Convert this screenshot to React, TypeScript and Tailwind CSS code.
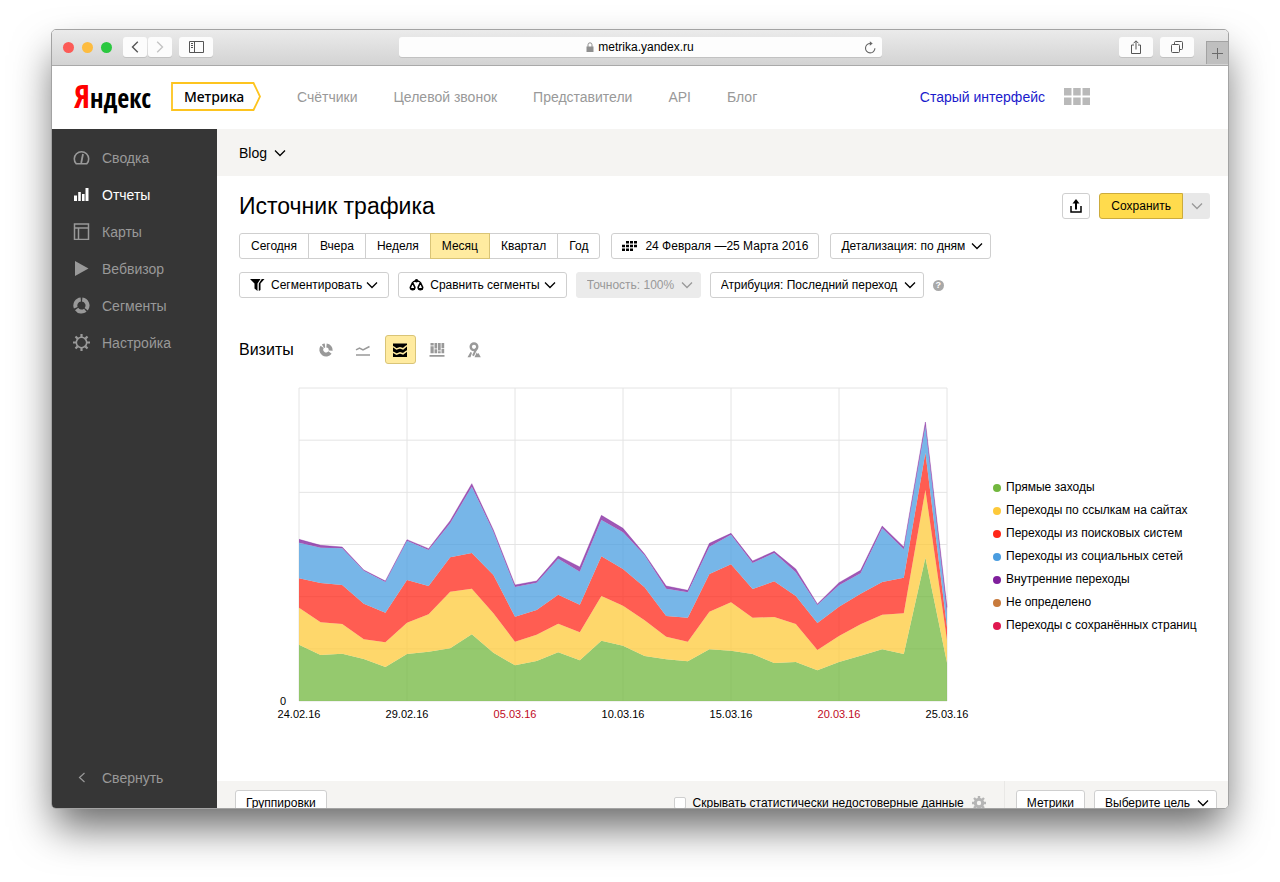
import { useState } from "react";
import type { ReactNode } from "react";
import clsx from "clsx";

type Series = {
  name: string;
  color: string;
  // cumulative height of the layer's upper edge, one entry per day
  tops?: number[];
};

const CHART_MAX = 939;
const DAYS = 30;

const series: Series[] = [
  {
    name: "Прямые заходы",
    color: "#72b73e",
    tops: [169, 138, 142, 126, 102, 141, 148, 158, 200, 145, 107, 120, 146, 122, 181, 166, 135, 125, 119, 155, 151, 141, 114, 117, 92, 117, 136, 155, 141, 430, 115],
  },
  {
    name: "Переходы по ссылкам на сайтах",
    color: "#fdc93a",
    tops: [280, 236, 231, 185, 176, 235, 260, 328, 337, 263, 178, 199, 232, 206, 315, 286, 242, 193, 178, 268, 296, 250, 252, 231, 153, 195, 230, 259, 263, 633, 183],
  },
  {
    name: "Переходы из поисковых систем",
    color: "#ff2718",
    tops: [368, 354, 348, 292, 265, 363, 345, 431, 444, 378, 253, 273, 319, 289, 434, 396, 341, 255, 250, 381, 410, 336, 359, 315, 234, 283, 322, 357, 370, 745, 221],
  },
  {
    name: "Переходы из социальных сетей",
    color: "#4a9de0",
    tops: [475, 460, 458, 391, 357, 481, 453, 533, 643, 508, 342, 355, 427, 388, 543, 506, 437, 337, 326, 463, 499, 414, 444, 386, 288, 347, 383, 518, 455, 825, 263],
  },
  {
    name: "Внутренние переходы",
    color: "#7f1f9c",
    tops: [485, 467, 462, 393, 360, 484, 457, 541, 652, 513, 348, 360, 435, 402, 557, 518, 441, 345, 332, 473, 503, 420, 449, 396, 291, 355, 392, 525, 462, 837, 281],
  },
  { name: "Не определено", color: "#c87a3c" },
  { name: "Переходы с сохранённых страниц", color: "#e0184f" },
];

const dates = [
  { label: "24.02.16" },
  { label: "29.02.16" },
  { label: "05.03.16", weekend: true },
  { label: "10.03.16" },
  { label: "15.03.16" },
  { label: "20.03.16", weekend: true },
  { label: "25.03.16" },
];

function Chevron({ className }: { className?: string }) {
  return (
    <svg viewBox="0 0 12 8" className={clsx("h-2 w-3 shrink-0", className)} fill="none" stroke="currentColor" strokeWidth="1.3">
      <path d="M1 1.5 6 6.5 11 1.5" />
    </svg>
  );
}

const menuIcons: Record<string, ReactNode> = {
  gauge: (
    <g fill="none" stroke="currentColor" strokeWidth="1.6">
      <path d="M3.2 14.8A7.2 7.2 0 1 1 13.8 14.8Z" strokeLinejoin="round" />
      <path d="M10 5 8.200 14" strokeWidth="1.8" />
    </g>
  ),
  bars: <path d="M1 9.500h3V15H1zM5.200 6h2.600v9H5.200zM9 8h2.600v7H9zM12.500 2h3v13h-3z" />,
  map: (
    <g fill="none" stroke="currentColor" strokeWidth="1.5">
      <path d="M1.5 1h14v15.500h-14zM1.5 5h14M5.5 5v11.500" />
    </g>
  ),
  play: <path d="M2 1 15.5 8.500 2 16z" />,
  ring: (
    <g fill="none" stroke="currentColor" strokeWidth="4">
      <path d="M9.2 2.500A6 6 0 0 1 13.200 12.200M12.300 13.200A6 6 0 0 1 3.600 12M2.800 10.800A6 6 0 0 1 7.800 2.500" />
    </g>
  ),
  gear: (
    <g fill="none" stroke="currentColor">
      <circle cx="8.5" cy="8.5" r="5.2" strokeWidth="1.6" />
      <path d="M8.5 0v3M8.5 14v3M0 8.5h3M14 8.5h3M2.5 2.5l2.1 2.1M12.4 12.4l2.1 2.1M2.5 14.5l2.1-2.1M12.4 4.6l2.1-2.1" strokeWidth="2.2" />
    </g>
  ),
};

const menu = [
  { title: "Сводка", icon: "gauge" },
  { title: "Отчеты", icon: "bars" },
  { title: "Карты", icon: "map" },
  { title: "Вебвизор", icon: "play" },
  { title: "Сегменты", icon: "ring" },
  { title: "Настройка", icon: "gear" },
];

const chartKinds: { title: string; icon: ReactNode }[] = [
  {
    title: "Круговая диаграмма",
    icon: (
      <g fill="none" stroke="currentColor" strokeWidth="4">
        <path d="M8.500 3.500A4.700 4.700 0 0 1 12.700 8.600" />
        <path d="M12 10.500A4.700 4.700 0 0 1 4.200 4.900" />
        <path d="M5 4.200A4.700 4.700 0 0 1 7 3.500" />
      </g>
    ),
  },
  {
    title: "Линии",
    icon: (
      <g fill="none" stroke="currentColor" strokeWidth="1.5">
        <path d="M1 7.800 4.500 6 8 8 14.500 4.500M1 13h14" />
      </g>
    ),
  },
  {
    title: "Области",
    icon: (
      <g>
        <path d="M1 1.5h14v13.500H1z" />
        <path d="M1 4.500 4.500 7 8 5.800 11 6.800 15 3.500M1 10.200 4.500 12.200 8 10.800 11 11.800 15 8.800" fill="none" stroke="#ffeba0" strokeWidth="1.500" />
      </g>
    ),
  },
  {
    title: "Колонки",
    icon: (
      <path d="M1.500 1h3.200v2.500H1.500zM1.500 4.300h3.200v7H1.500zM5.500 1h2.700v5.500H5.500zM5.500 7.300h2.700v4H5.500zM9 1h2.700v7.500H9zM9 9.300h2.700v2H9zM12.500 1h2.700v5h-2.700zM12.500 6.800h2.700v4.500h-2.700zM.5 13h15v1.700H.5z" />
    ),
  },
  {
    title: "Карта",
    icon: (
      <g>
        <circle cx="8" cy="4.800" r="3.300" fill="none" stroke="currentColor" strokeWidth="2.400" />
        <path d="M10.500 6.500 7 13.800" stroke="currentColor" strokeWidth="2" />
        <path d="M1.500 15.200 4.500 10 6 10.800 4.500 15.200zM8.500 15.200l2.200-4.800 1 1.600L12.500 11l2.300 4.200z" />
      </g>
    ),
  },
];

const buttonBox = "flex h-[26px] items-center rounded-[3px] border border-[#cfcfcf] bg-white px-2.5 whitespace-nowrap";

type PickerProps = {
  label: string;
  text: string;
  disabled?: boolean;
};

function Picker({ label, text, disabled }: PickerProps) {
  return (
    <span className="relative flex">
      <select
        aria-label={label}
        disabled={disabled}
        className={clsx(
          "h-[26px] appearance-none rounded-[3px] border pr-[25px] pl-2.5 whitespace-nowrap",
          disabled ? "border-[#ebebeb] bg-[#ebebeb] text-[#999] opacity-100" : "border-[#cfcfcf] bg-white",
        )}
      >
        <option>{text}</option>
      </select>
      <Chevron className={clsx("pointer-events-none absolute top-[9px] right-2", disabled && "text-[#999]")} />
    </span>
  );
}

function BrowserBar() {
  const chromeButton = "flex h-5 items-center justify-center rounded-[3px] bg-[#fcfcfc] text-[#555] shadow-[0_1px_0_rgba(0,0,0,0.1)]";

  return (
    <div className="grid h-9 shrink-0 grid-cols-[1fr_minmax(0,483px)_1fr] items-center border-b border-[#a9a9a9] bg-linear-to-b from-[#ebebeb] to-[#d3d3d3] pb-px">
      <div className="flex items-center pl-[11px]">
        <div className="flex gap-2">
          <span className="h-[11px] w-[11px] rounded-full bg-[#fc5b57]" />
          <span className="h-[11px] w-[11px] rounded-full bg-[#fdbc40]" />
          <span className="h-[11px] w-[11px] rounded-full bg-[#2bc840]" />
        </div>
        <button type="button" aria-label="Назад" className={clsx(chromeButton, "ml-[11px] w-6")}>
          <svg viewBox="0 0 8 12" className="h-3 w-2" fill="none" stroke="currentColor" strokeWidth="1.4">
            <path d="M6.800 .8 1.500 6l5.300 5.200" />
          </svg>
        </button>
        <button type="button" aria-label="Вперёд" className={clsx(chromeButton, "ml-px w-6")}>
          <svg viewBox="0 0 8 12" className="h-3 w-2 text-[#c4c4c4]" fill="none" stroke="currentColor" strokeWidth="1.4">
            <path d="M1.200 .8 6.500 6l-5.300 5.200" />
          </svg>
        </button>
        <button type="button" aria-label="Боковая панель" className={clsx(chromeButton, "ml-[7px] w-[34px]")}>
          <svg viewBox="0 0 15 12" className="h-3 w-[15px]" fill="none" stroke="currentColor">
            <path d="M.5.5h14v11H.5zM5.500.5v11M2 2.500h2M2 4.500h2M2 6.500h2" />
          </svg>
        </button>
      </div>

      <div className="relative flex h-5 items-center justify-center rounded-[3px] bg-[#fdfdfd] shadow-[0_1px_0_rgba(0,0,0,0.1)]">
        <svg viewBox="0 0 8 10" className="mr-1 h-2.5 w-2 text-[#8f8f8f]">
          <path d="M.5 4.500h7V10h-7z" fill="currentColor" />
          <path d="M2 5V2.800a2 2 0 0 1 4 0V5" fill="none" stroke="currentColor" />
        </svg>
        <input aria-label="Адрес" defaultValue="metrika.yandex.ru" className="[field-sizing:content] bg-transparent outline-none" />
        <button type="button" aria-label="Обновить" className="absolute right-1.5 text-[#666]">
          <svg viewBox="0 0 12 13" className="h-[13px] w-3" fill="none" stroke="currentColor" strokeWidth="1.1">
            <path d="M6.500 2.500A4.700 4.700 0 1 0 10.900 7.200" />
            <path d="M5.800 .3 8.700 2.600 5.800 4.800z" fill="currentColor" stroke="none" />
          </svg>
        </button>
      </div>

      <div className="flex items-center justify-end self-stretch">
        <button type="button" aria-label="Поделиться" className={clsx(chromeButton, "w-[34px]")}>
          <svg viewBox="0 0 12 14" className="h-3.5 w-3" fill="none" stroke="currentColor">
            <path d="M4 5H1.500v8.500h9V5H8M6 9.500V1M3.500 3.300 6 .8l2.500 2.500" />
          </svg>
        </button>
        <button type="button" aria-label="Все вкладки" className={clsx(chromeButton, "ml-[7px] w-[34px]")}>
          <svg viewBox="0 0 12 12" className="h-3 w-3" fill="none" stroke="currentColor">
            <rect x=".5" y="3.500" width="8" height="8" rx="1" />
            <path d="M3.500 3.500v-2a1 1 0 0 1 1-1h6a1 1 0 0 1 1 1v6a1 1 0 0 1-1 1h-2" />
          </svg>
        </button>
        <button
          type="button"
          aria-label="Новая вкладка"
          className="ml-3 flex h-[23px] w-[22px] items-center justify-center self-end border-t border-l border-[#a2a2a2] bg-[#bfbfbf] text-[#6a6a6a]"
        >
          <svg viewBox="0 0 11 11" className="h-[11px] w-[11px]" stroke="currentColor">
            <path d="M5.500 0v11M0 5.500h11" />
          </svg>
        </button>
      </div>
    </div>
  );
}

function Header() {
  return (
    <header className="flex h-[63px] shrink-0 items-center bg-white pr-[138px] pb-0.5 pl-[22px] text-sm">
      <a href="#" className="w-[75px] font-['Noto_Sans_ExtraCondensed','Open_Sans_Condensed','Roboto_Condensed','Liberation_Sans_Narrow',sans-serif] text-[26px] leading-8 font-light whitespace-nowrap">
        <span className="text-[32px] text-[#f00]">Я</span>ндекс
      </a>
      <a href="#" className="relative ml-[22px] flex h-[29px] w-[90px] items-center pl-[13px] font-['Noto_Sans',sans-serif] font-medium">
        <svg viewBox="0 0 90 29" className="absolute inset-0 h-full w-full" fill="none" stroke="#fdc41f" strokeWidth="1.800">
          <path d="M1 1h81.500l6.500 13.500-6.500 13.500H1z" />
        </svg>
        Метрика
      </a>
      <nav className="ml-9 flex gap-9 whitespace-nowrap text-[#999]">
        <a href="#">Счётчики</a>
        <a href="#">Целевой звонок</a>
        <a href="#">Представители</a>
        <a href="#">API</a>
        <a href="#">Блог</a>
      </nav>
      <a href="#" className="ml-auto whitespace-nowrap text-[#1a1acc]">Старый интерфейс</a>
      <button type="button" aria-label="Сервисы" className="ml-[19px] text-[#b9b9b9]">
        <svg viewBox="0 0 26 17" className="h-[17px] w-[26px]" fill="currentColor">
          <path d="M0 0h7.500v7.500H0zM9.200 0h7.500v7.500H9.200zM18.500 0H26v7.500h-7.500zM0 9.500h7.500V17H0zM9.200 9.500h7.500V17H9.200zM18.500 9.500H26V17h-7.500z" />
        </svg>
      </button>
    </header>
  );
}

function Sidebar() {
  const [active, setActive] = useState("Отчеты");

  return (
    <aside className="flex w-[165px] shrink-0 flex-col bg-[#363636] pt-2.5 pb-3 text-sm text-[#999]">
      {menu.map((item) => (
        <button
          key={item.title}
          type="button"
          onClick={() => setActive(item.title)}
          className={clsx("flex h-[37px] items-center gap-3 pl-[21px]", item.title === active && "text-white")}
        >
          <svg viewBox="0 0 17 17" className="h-[17px] w-[17px]" fill="currentColor">
            {menuIcons[item.icon]}
          </svg>
          {item.title}
        </button>
      ))}
      <button type="button" className="mt-auto flex h-[37px] items-center gap-3 pl-[21px]">
        <svg viewBox="0 0 17 17" className="h-[17px] w-[17px]" fill="none" stroke="currentColor" strokeWidth="1.200">
          <path d="M11.500 4 6.500 8.500l5 4.500" />
        </svg>
        Свернуть
      </button>
    </aside>
  );
}

function Periods() {
  const [period, setPeriod] = useState("Месяц");

  return (
    <div className="flex">
      {["Сегодня", "Вчера", "Неделя", "Месяц", "Квартал", "Год"].map((name) => (
        <button
          key={name}
          type="button"
          aria-pressed={name === period}
          onClick={() => setPeriod(name)}
          className={clsx(
            "relative -ml-px h-[26px] border px-[11px] whitespace-nowrap first:ml-0 first:rounded-l-[3px] last:rounded-r-[3px]",
            name === period ? "z-10 border-[#d9c477] bg-[#ffeba0]" : "border-[#cfcfcf] bg-white",
          )}
        >
          {name}
        </button>
      ))}
    </div>
  );
}

function TrafficChart() {
  const layers = series.filter((s) => s.tops);

  const areaPath = (index: number) => {
    const top = layers[index].tops!.map((v, i) => `${i},${CHART_MAX - v}`);
    const bottom = layers[index].tops!.map((_, i) => `${i},${CHART_MAX - (index ? layers[index - 1].tops![i] : 0)}`);
    return `M${top.join("L")}L${bottom.reverse().join("L")}Z`;
  };

  return (
    <div className="grid min-w-0 flex-1 grid-cols-[60px_1fr] text-[11px] leading-[14px]">
      <span className="-mb-[7px] self-end pr-[13px] text-right">0</span>
      <svg viewBox={`0 0 ${DAYS} ${CHART_MAX}`} preserveAspectRatio="none" className="h-[313px] w-full overflow-visible">
        <g stroke="#e4e4e4" fill="none">
          {[0, 1, 2, 3, 4, 5, 6].map((i) => (
            <g key={i}>
              <path d={`M0 ${(i * CHART_MAX) / 6}H${DAYS}`} vectorEffect="non-scaling-stroke" />
              <path d={`M${i * 5} 0V${CHART_MAX}`} vectorEffect="non-scaling-stroke" />
            </g>
          ))}
        </g>
        {layers.map((s, i) => (
          <path key={s.name} d={areaPath(i)} fill={s.color} fillOpacity="0.75" />
        ))}
        <path
          d={`M${layers[4].tops!.map((v, i) => `${i},${CHART_MAX - v}`).join("L")}`}
          fill="none"
          stroke="#7f1f9c"
          strokeOpacity="0.35"
          vectorEffect="non-scaling-stroke"
        />
      </svg>
      <ul className="col-start-2 mt-1.5 flex justify-between">
        {dates.map((d) => (
          <li key={d.label} className={clsx("flex w-0 justify-center whitespace-nowrap", d.weekend && "text-[#c00a1e]")}>
            {d.label}
          </li>
        ))}
      </ul>
    </div>
  );
}

function Report() {
  const [kind, setKind] = useState("Области");

  return (
    <div className="pt-[17px] pr-[18px] pb-[60px] pl-[22px]">
      <div className="flex items-center">
        <h1 className="text-[23px] leading-[26px]">Источник трафика</h1>
        <button type="button" aria-label="Экспорт" className="ml-auto flex h-[26px] w-7 items-center justify-center rounded-[3px] border border-[#cfcfcf]">
          <svg viewBox="0 0 12 14" className="h-3.5 w-3" fill="none" stroke="currentColor" strokeWidth="1.500">
            <path d="M1 7v6h10V7" />
            <path d="M6 10.500V3" strokeWidth="2" />
            <path d="M6 0 9.500 4.500h-7z" fill="currentColor" stroke="none" />
          </svg>
        </button>
        <button type="button" className="ml-[9px] h-[26px] rounded-l-[3px] border border-[#ccab3c] bg-[#ffdb4d] px-[11px]">
          Сохранить
        </button>
        <button type="button" aria-label="Другие варианты" className="flex h-[26px] w-[27px] items-center justify-center rounded-r-[3px] bg-[#e8e8e8] text-[#999]">
          <Chevron />
        </button>
      </div>

      <div className="mt-3.5 flex gap-[11px]">
        <Periods />
        <button type="button" className={buttonBox}>
          <svg viewBox="0 0 15 10" className="mr-2 h-2.5 w-[15px]" fill="currentColor">
            <path d="M4 0h3v2.600H4zM8 0h3v2.600H8zM12 0h3v2.600h-3zM0 3.700h3v2.600H0zM4 3.700h3v2.600H4zM8 3.700h3v2.600H8zM12 3.700h3v2.600h-3zM0 7.400h3V10H0zM4 7.400h3V10H4zM8 7.400h3V10H8z" />
          </svg>
          24 Февраля —25 Марта 2016
        </button>
        <Picker label="Детализация" text="Детализация: по дням" />
      </div>

      <div className="mt-[13px] flex items-center gap-[9px]">
        <button type="button" className={buttonBox}>
          <svg viewBox="0 0 15 12" className="mr-1.5 h-3 w-[15px]" fill="currentColor">
            <path d="M0 0h10.500L7.500 4.500V12L4.500 9.500v-5zM14.500 0 10.500 4.500V11L8.800 12V4.500L11.800 0z" />
          </svg>
          Сегментировать
          <Chevron className="ml-1" />
        </button>
        <button type="button" className={buttonBox}>
          <svg viewBox="0 0 15 12" className="mr-1.5 h-3 w-[15px]" fill="none" stroke="currentColor">
            <path d="M3.600 3.500 1.300 8.300A2.300 2.300 0 0 0 5.900 8.300zM11.400 3.500 9.100 8.300A2.300 2.300 0 0 0 13.700 8.300z" strokeWidth="1.600" strokeLinejoin="round" />
            <path d="M1.300 9h4.600v2H1.800zM9.100 9h4.600v2H9.600z" fill="currentColor" stroke="none" />
            <path d="M4 2.800 7.500 1.500 11 2.800" strokeWidth="1.400" />
            <circle cx="7.500" cy="1.800" r="1.800" fill="currentColor" stroke="none" />
          </svg>
          Сравнить сегменты
          <Chevron className="ml-1" />
        </button>
        <Picker label="Точность" text="Точность: 100%" disabled />
        <Picker label="Атрибуция" text="Атрибуция: Последний переход" />
        <button
          type="button"
          aria-label="Справка"
          className="flex h-[11px] w-[11px] items-center justify-center rounded-full bg-[#a8a8a8] text-[9px] leading-none font-bold text-white"
        >
          ?
        </button>
      </div>

      <div className="mt-[37px] flex items-center gap-1.5">
        <h2 className="mr-[11px] text-base leading-5">Визиты</h2>
        {chartKinds.map((k) => (
          <button
            key={k.title}
            type="button"
            aria-label={k.title}
            onClick={() => setKind(k.title)}
            className={clsx(
              "flex h-[29px] w-[31px] items-center justify-center rounded-[3px] border",
              k.title === kind ? "border-[#d9c477] bg-[#ffeba0]" : "border-transparent text-[#999]",
            )}
          >
            <svg viewBox="0 0 16 16" className="h-4 w-4" fill="currentColor">
              {k.icon}
            </svg>
          </button>
        ))}
      </div>

      <div className="mt-6 flex items-center gap-[46px]">
        <TrafficChart />
        <ul className="w-[217px] shrink-0 pt-1 leading-[23px]">
          {series.map((s) => (
            <li key={s.name} className="flex items-center gap-[5px] whitespace-nowrap">
              <span className="h-2 w-2 rounded-full" style={{ backgroundColor: s.color }} />
              {s.name}
            </li>
          ))}
        </ul>
      </div>
    </div>
  );
}

function TableBar() {
  return (
    <div className="flex shrink-0 items-center bg-[#f5f4f2] pr-[11px] pl-[18px]">
      <button type="button" className={buttonBox}>Группировки</button>
      <label className="ml-auto flex items-center gap-[7px] whitespace-nowrap">
        <input type="checkbox" className="h-3 w-3 appearance-none rounded-[2px] border border-[#cfcfcf] bg-white" />
        Скрывать статистически недостоверные данные
      </label>
      <button type="button" aria-label="Настроить" className="ml-2 text-[#b5b5b5]">
        <svg viewBox="0 0 14 14" className="h-3.5 w-3.5" fill="none" stroke="currentColor">
          <circle cx="7" cy="7" r="3.700" strokeWidth="3" />
          <path d="M7 0v3M7 11v3M0 7h3M11 7h3M2 2l2 2M10 10l2 2M2 12l2-2M10 4l2-2" strokeWidth="2.400" />
        </svg>
      </button>
      <div className="ml-[18px] flex gap-[9px] border-l border-[#e9e8e6] py-[9px] pl-[11px]">
        <button type="button" className={buttonBox}>Метрики</button>
        <Picker label="Цель" text="Выберите цель" />
      </div>
    </div>
  );
}

export default function App() {
  return (
    <div className="flex h-screen bg-white px-[51px] pt-[29px] pb-[73px] font-['Liberation_Sans',Arial,sans-serif] text-xs text-black">
      <div className="flex min-w-0 flex-1 flex-col overflow-hidden rounded-[5px] border border-[#a3a3a3] bg-white shadow-[0_22px_42px_-4px_rgba(0,0,0,0.6)]">
        <BrowserBar />
        <Header />
        <div className="flex min-h-0 flex-1">
          <Sidebar />
          <main className="min-w-0 flex-1 overflow-hidden">
            <div className="flex h-[47px] items-center bg-[#f5f4f2] pl-[22px]">
              <span className="relative flex">
                <select aria-label="Счётчик" className="appearance-none pr-[18px] text-sm">
                  <option>Blog</option>
                </select>
                <Chevron className="pointer-events-none absolute top-1.5 right-0" />
              </span>
            </div>
            <Report />
            <TableBar />
          </main>
        </div>
      </div>
    </div>
  );
}
